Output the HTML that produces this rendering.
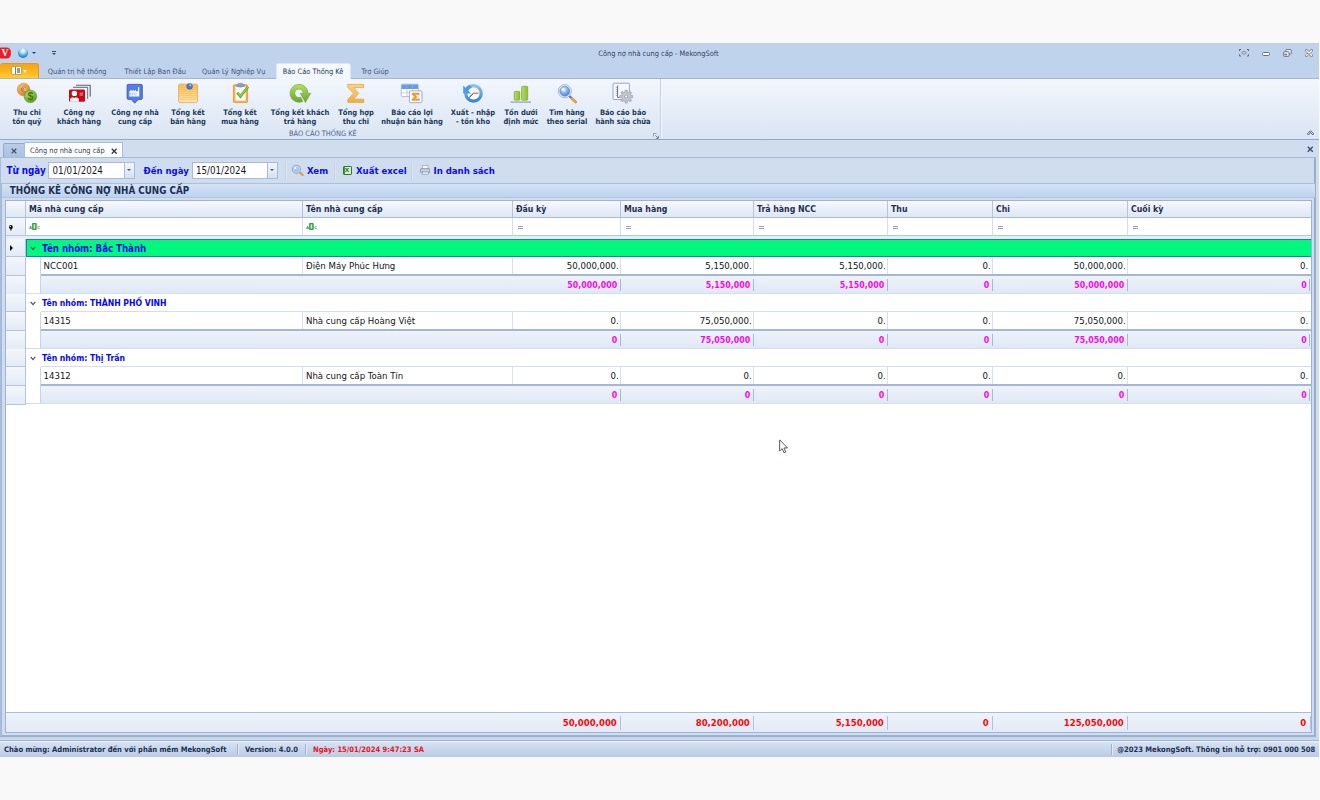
<!DOCTYPE html>
<html lang="vi">
<head>
<meta charset="utf-8">
<title>Công nợ nhà cung cấp - MekongSoft</title>
<style>
*{box-sizing:border-box;margin:0;padding:0}
html,body{width:1320px;height:800px;overflow:hidden;background:#f9f9f9}
body{font-family:"DejaVu Sans Condensed","Liberation Sans",sans-serif;font-size:7.4px;color:#1e395b;position:relative}
#win{position:absolute;left:0;top:43px;width:1319px;height:714px;background:#cfddee;overflow:hidden}
#win div{position:absolute;white-space:nowrap}
#titlebar{left:0;top:0;width:1319px;height:35px;background:#c0d3ec;border-top:1px solid #bccfe9}
#title{left:0;top:4.8px;width:1317px;text-align:center;font-size:7.4px;color:#33415f;line-height:12px}
.rtab{top:23px;font-size:7.4px;color:#3f5477;line-height:11px}
#rtab-active{left:275.6px;top:20.3px;width:75.8px;height:15.6px;background:linear-gradient(#f7fafe,#f2f6fd);border:1px solid #dbe5f3;border-bottom:none;border-radius:2.5px 2.5px 0 0}
#appbtn{left:0;top:20px;width:39px;height:15px;border-radius:3px 3px 0 0;background:linear-gradient(#f7a41a,#fbb31a 45%,#ffcf2e);border:1px solid #e3981e;border-bottom:none;border-left:none}
#ribbon{left:0;top:34.5px;width:1319px;height:62px;background:linear-gradient(#f3f7fd,#e8eff9 40%,#dae5f3);border-top:1px solid #a3b7d5;border-bottom:1px solid #93a9c9}
.rb{top:64.7px;text-align:center;font-weight:bold;font-size:7.5px;line-height:9.4px;color:#1e395b;transform:translateX(-50%)}
.ico{top:39px;width:24px;height:22px}
#grpcap{left:289px;top:85.5px;font-size:7.4px;color:#4e6590;line-height:10px}
#grpsep{left:659.5px;top:36px;width:1px;height:59px;background:#c3d1e5;box-shadow:1px 0 0 #f4f8fd}

/* doc area */
#dtx{left:3px;top:100.2px;width:22px;height:14.5px;background:linear-gradient(#b9cde8,#a9c0df);border:1px solid #8fa8cb;border-bottom:none;border-radius:2px 2px 0 0}
#dtab{left:23.8px;top:98.7px;width:99px;height:16.2px;background:#fff;border:1px solid #a9bcd9;border-bottom:none;border-radius:1px 1px 0 0}
#dtabt{left:30px;top:102px;font-size:7.4px;line-height:11px;color:#2c3e5c}
#panel{left:0;top:114px;width:1316px;height:580px;background:#cfddee;border-top:1px solid #a6b9d6;border-left:1px solid #a9bddb;border-right:2px solid #97aece;border-bottom:2px solid #9bb1d1}
#tb-line{left:2px;top:139.5px;width:1313px;height:1px;background:#aebfd8}
.lbl{font-weight:bold;color:#0a0af5;font-size:9.5px;line-height:12px;top:121.8px}
.inp{top:118.9px;height:17.1px;background:#fff;border:1px solid #a9bbd6;font-size:9.7px;color:#1a1a1a;line-height:15.4px;padding-left:3.2px}
.dd{top:119.9px;width:10.5px;height:15.1px;background:linear-gradient(#f2f6fb,#d5e1f0);border-left:1px solid #a9bbd6}
.dd:after{content:"";position:absolute;left:2.1px;top:6.2px;border:2.7px solid transparent;border-top:2.7px solid #46556f}
.tsep{top:118.5px;width:1px;height:18px;background:#c2d1e6;box-shadow:1px 0 0 #dae5f3}
#band{left:2px;top:140.5px;width:1313px;height:14px;background:linear-gradient(#d5e3f7,#c9dbf3 50%,#bed3ee);border-bottom:1px solid #b0c5e2}
#bandt{left:9.8px;top:142px;font-weight:bold;font-size:9.78px;line-height:12px;color:#1e2f52}
#grid{left:5px;top:157px;width:1307px;height:533px;background:#fff;border:1px solid #9db3d3}

.gh{background:linear-gradient(#f6f9fd,#eaf0f9 50%,#dde7f4)}
.ind{background:linear-gradient(#f4f7fc,#e3ebf6)}
.ht{font-weight:bold;font-size:8.7px;line-height:12px;color:#1e2f52}
.gt{font-weight:bold;font-size:8.6px;line-height:12px;color:#0505fa}
.gt1{font-weight:bold;font-size:9.6px;line-height:13px;color:#0808f0}
.ct{font-size:9.55px;line-height:12px;color:#141414}
.st{font-weight:bold;font-size:8.8px;line-height:12px;color:#fa0ae6}
.tt{font-weight:bold;font-size:9.5px;line-height:12px;color:#f50a0a}
.sm{background:linear-gradient(#eef3fa,#dfe8f5)}
.ft{background:linear-gradient(#eef3fa,#e2eaf6)}

#status{left:0;top:697px;width:1319px;height:17px;background:linear-gradient(#d9e5f4,#c9d8ec 45%,#b9cbe5);border-top:1px solid #9fb4d4;box-shadow:inset 0 1px 0 #eaf1fa}
.sbt{top:701.3px;font-weight:bold;font-size:7.56px;line-height:11px;color:#1e2f52}
.sbs{top:700.5px;width:1px;height:11px;background:#9fb2cf;box-shadow:1px 0 0 #e3ebf6}
#pbot{left:0;top:694px;width:1319px;height:3px;background:linear-gradient(#c3d1e5,#d0dcec)}
.x{font-size:9px;line-height:10px;color:#3b4866;font-weight:bold}
#inner{left:1px;top:140px;width:1314px;height:553px;border-left:1px solid #a3b7d6}
</style>
</head>
<body>
<div id="win">
  <div id="titlebar"></div>
  <div id="title">Công nợ nhà cung cấp - MekongSoft</div>
  <div id="appbtn"></div>
  <div class="rtab" style="left:47.7px">Quản trị hệ thống</div>
  <div class="rtab" style="left:124.5px">Thiết Lập Ban Đầu</div>
  <div class="rtab" style="left:202px">Quản Lý Nghiệp Vụ</div>
  <div class="rtab" style="left:361.5px">Trợ Giúp</div>
  <div id="ribbon"></div>
  <div id="rtab-active"></div>
  <div class="rtab" style="left:282.7px;top:23px;color:#1e395b">Báo Cáo Thống Kê</div>
  <div id="grpsep"></div>
  <div class="rb" style="left:27px">Thu chi<br>tồn quỹ</div>
  <div class="rb" style="left:79px">Công nợ<br>khách hàng</div>
  <div class="rb" style="left:135px">Công nợ nhà<br>cung cấp</div>
  <div class="rb" style="left:188px">Tổng kết<br>bán hàng</div>
  <div class="rb" style="left:240px">Tổng kết<br>mua hàng</div>
  <div class="rb" style="left:300px">Tổng kết khách<br>trả hàng</div>
  <div class="rb" style="left:356px">Tổng hợp<br>thu chi</div>
  <div class="rb" style="left:412px">Báo cáo lợi<br>nhuận bán hàng</div>
  <div class="rb" style="left:473px">Xuất - nhập<br>- tồn kho</div>
  <div class="rb" style="left:521px">Tồn dưới<br>định mức</div>
  <div class="rb" style="left:567px">Tìm hàng<br>theo serial</div>
  <div class="rb" style="left:623px">Báo cáo bảo<br>hành sửa chữa</div>
  <div id="grpcap">BÁO CÁO THỐNG KÊ</div>

  <div id="dtx"></div>
  <div id="dtab"></div>
  <div id="dtabt">Công nợ nhà cung cấp</div>
  <div id="panel"></div>
  <div class="lbl" style="left:6.4px;font-size:9.8px">Từ ngày</div>
  <div class="inp" style="left:48.4px;width:86.6px">01/01/2024</div>
  <div class="dd" style="left:123.5px"></div>
  <div class="lbl" style="left:143.5px">Đến ngày</div>
  <div class="inp" style="left:191.8px;width:86.6px">15/01/2024</div>
  <div class="dd" style="left:266.9px"></div>
  <div class="tsep" style="left:285px"></div>
  <div class="lbl" style="left:307px">Xem</div>
  <div class="tsep" style="left:334px"></div>
  <div class="lbl" style="left:356px">Xuất excel</div>
  <div class="tsep" style="left:411px"></div>
  <div class="lbl" style="left:433.5px">In danh sách</div>
  <div id="inner"></div>
  <div id="tb-line"></div>
  <div id="band"></div>
  <div id="bandt">THỐNG KÊ CÔNG NỢ NHÀ CUNG CẤP</div>
  <div id="grid"></div>
<!--GRID-->
  <div class="gh" style="left:6px;top:158px;width:1305px;height:16px;"></div>
  <div style="left:6px;top:173.8px;width:1305px;height:1px;background:#a9bcd8"></div>
  <div style="left:25px;top:158px;width:1px;height:16px;background:#b3c4dd"></div>
  <div style="left:302px;top:158px;width:1px;height:16px;background:#b3c4dd"></div>
  <div style="left:512px;top:158px;width:1px;height:16px;background:#b3c4dd"></div>
  <div style="left:620px;top:158px;width:1px;height:16px;background:#b3c4dd"></div>
  <div style="left:753px;top:158px;width:1px;height:16px;background:#b3c4dd"></div>
  <div style="left:887px;top:158px;width:1px;height:16px;background:#b3c4dd"></div>
  <div style="left:992px;top:158px;width:1px;height:16px;background:#b3c4dd"></div>
  <div style="left:1127px;top:158px;width:1px;height:16px;background:#b3c4dd"></div>
  <div class="ht" style="left:29px;top:159.6px;width:100px;height:12px;">Mã nhà cung cấp</div>
  <div class="ht" style="left:306px;top:159.6px;width:100px;height:12px;">Tên nhà cung cấp</div>
  <div class="ht" style="left:516px;top:159.6px;width:100px;height:12px;">Đầu kỳ</div>
  <div class="ht" style="left:624px;top:159.6px;width:100px;height:12px;">Mua hàng</div>
  <div class="ht" style="left:757px;top:159.6px;width:100px;height:12px;">Trả hàng NCC</div>
  <div class="ht" style="left:891px;top:159.6px;width:100px;height:12px;">Thu</div>
  <div class="ht" style="left:996px;top:159.6px;width:100px;height:12px;">Chi</div>
  <div class="ht" style="left:1131px;top:159.6px;width:100px;height:12px;">Cuối kỳ</div>
  <div class="ind" style="left:6px;top:174.8px;width:19.5px;height:17.2px;"></div>
  <div style="left:6px;top:192px;width:1305px;height:1px;background:#b7c7df"></div>
  <div style="left:302px;top:174.8px;width:1px;height:17.2px;background:#d3deee"></div>
  <div style="left:512px;top:174.8px;width:1px;height:17.2px;background:#d3deee"></div>
  <div style="left:620px;top:174.8px;width:1px;height:17.2px;background:#d3deee"></div>
  <div style="left:753px;top:174.8px;width:1px;height:17.2px;background:#d3deee"></div>
  <div style="left:887px;top:174.8px;width:1px;height:17.2px;background:#d3deee"></div>
  <div style="left:992px;top:174.8px;width:1px;height:17.2px;background:#d3deee"></div>
  <div style="left:1127px;top:174.8px;width:1px;height:17.2px;background:#d3deee"></div>
  <div style="left:25px;top:174.8px;width:1px;height:17.2px;background:#b3c4dd"></div>
  <div style="left:6px;top:193px;width:1305px;height:3px;background:#e6edf7"></div>
  <div style="left:28.9px;top:179px;width:11px;height:9px"><svg width="11" height="9" viewBox="0 0 11 9"><rect x="3.1" y="1" width="4.6" height="7" rx="0.7" fill="#35a23a"/><rect x="4.6" y="2.3" width="1.6" height="4.4" fill="#cfeccf"/><text x="0" y="6.6" font-size="4.2" font-weight="bold" fill="#4a6fb5" font-family="Liberation Sans, sans-serif">A</text><text x="8.2" y="6.6" font-size="4.2" font-weight="bold" fill="#4a6fb5" font-family="Liberation Sans, sans-serif">C</text></svg></div>
  <div style="left:305.9px;top:179px;width:11px;height:9px"><svg width="11" height="9" viewBox="0 0 11 9"><rect x="3.1" y="1" width="4.6" height="7" rx="0.7" fill="#35a23a"/><rect x="4.6" y="2.3" width="1.6" height="4.4" fill="#cfeccf"/><text x="0" y="6.6" font-size="4.2" font-weight="bold" fill="#4a6fb5" font-family="Liberation Sans, sans-serif">A</text><text x="8.2" y="6.6" font-size="4.2" font-weight="bold" fill="#4a6fb5" font-family="Liberation Sans, sans-serif">C</text></svg></div>
  <div style="left:518px;top:182.6px;width:4.5px;height:0.9px;background:#8ea3c6"></div>
  <div style="left:518px;top:184.6px;width:4.5px;height:0.9px;background:#8ea3c6"></div>
  <div style="left:626px;top:182.6px;width:4.5px;height:0.9px;background:#8ea3c6"></div>
  <div style="left:626px;top:184.6px;width:4.5px;height:0.9px;background:#8ea3c6"></div>
  <div style="left:759px;top:182.6px;width:4.5px;height:0.9px;background:#8ea3c6"></div>
  <div style="left:759px;top:184.6px;width:4.5px;height:0.9px;background:#8ea3c6"></div>
  <div style="left:893px;top:182.6px;width:4.5px;height:0.9px;background:#8ea3c6"></div>
  <div style="left:893px;top:184.6px;width:4.5px;height:0.9px;background:#8ea3c6"></div>
  <div style="left:998px;top:182.6px;width:4.5px;height:0.9px;background:#8ea3c6"></div>
  <div style="left:998px;top:184.6px;width:4.5px;height:0.9px;background:#8ea3c6"></div>
  <div style="left:1133px;top:182.6px;width:4.5px;height:0.9px;background:#8ea3c6"></div>
  <div style="left:1133px;top:184.6px;width:4.5px;height:0.9px;background:#8ea3c6"></div>
  <div style="left:8px;top:181px;width:6px;height:6px"><svg width="6" height="6" viewBox="0 0 6 6"><circle cx="2.9" cy="1.9" r="1.9" fill="#111"/><path d="M1.4 2.6H4.4L3.5 4V5.6H2.3V4Z" fill="#111"/><circle cx="2.3" cy="1.4" r="0.55" fill="#fff"/></svg></div>
  <div class="ind" style="left:6px;top:196px;width:19.5px;height:17px;"></div>
  <div style="left:6px;top:213px;width:19.5px;height:1px;background:#b3c4dd"></div>
  <div class="ind" style="left:6px;top:214px;width:19.5px;height:17.5px;"></div>
  <div style="left:6px;top:231.5px;width:19.5px;height:1px;background:#b3c4dd"></div>
  <div class="ind" style="left:6px;top:232.5px;width:19.5px;height:18px;"></div>
  <div style="left:6px;top:250.5px;width:19.5px;height:1px;background:#b3c4dd"></div>
  <div style="left:25px;top:195.5px;width:1px;height:56px;background:#b3c4dd"></div>
  <div style="left:26px;top:195.5px;width:1285px;height:18.2px;background:#00f87c;border:1px solid #2b78b3;border-right:none"></div>
  <div style="left:9.5px;top:201.6px;width:0;height:0;border:3.2px solid transparent;border-left:3.6px solid #111;border-right:none"></div>
  <div style="left:30px;top:200.8px;width:6px;height:5px"><svg width="6" height="5" viewBox="0 0 6 5"><path d="M0.7 0.9 L3 3.6 L5.3 0.9" fill="none" stroke="#2e5f4a" stroke-width="1.1"/></svg></div>
  <div class="gt1" style="left:42px;top:198.8px;width:200px;height:12px;">Tên nhóm: Bắc Thành</div>
  <div style="left:40px;top:213.5px;width:1px;height:37.5px;background:#c8d5e8"></div>
  <div style="left:302px;top:213.5px;width:1px;height:17.5px;background:#d6e0ef"></div>
  <div style="left:512px;top:213.5px;width:1px;height:17.5px;background:#d6e0ef"></div>
  <div style="left:620px;top:213.5px;width:1px;height:17.5px;background:#d6e0ef"></div>
  <div style="left:753px;top:213.5px;width:1px;height:17.5px;background:#d6e0ef"></div>
  <div style="left:887px;top:213.5px;width:1px;height:17.5px;background:#d6e0ef"></div>
  <div style="left:992px;top:213.5px;width:1px;height:17.5px;background:#d6e0ef"></div>
  <div style="left:1127px;top:213.5px;width:1px;height:17.5px;background:#d6e0ef"></div>
  <div class="ct" style="left:43.5px;top:216.5px;width:200px;height:12px;">NCC001</div>
  <div class="ct" style="left:306px;top:216.5px;width:200px;height:12px;">Điện Máy Phúc Hưng</div>
  <div class="ct" style="left:498.7px;top:216.5px;width:120px;height:12px;text-align:right">50,000,000.</div>
  <div class="ct" style="left:631.7px;top:216.5px;width:120px;height:12px;text-align:right">5,150,000.</div>
  <div class="ct" style="left:765.7px;top:216.5px;width:120px;height:12px;text-align:right">5,150,000.</div>
  <div class="ct" style="left:870.7px;top:216.5px;width:120px;height:12px;text-align:right">0.</div>
  <div class="ct" style="left:1005.7px;top:216.5px;width:120px;height:12px;text-align:right">50,000,000.</div>
  <div class="ct" style="left:1188.2px;top:216.5px;width:120px;height:12px;text-align:right">0.</div>
  <div style="left:40.5px;top:231.3px;width:1270.5px;height:1.6px;background:#a3b7d6"></div>
  <div class="sm" style="left:41px;top:232.9px;width:1270px;height:17.4px;"></div>
  <div style="left:26px;top:250.3px;width:1285px;height:1px;background:#d3deee"></div>
  <div style="left:619.8px;top:236px;width:1.2px;height:12px;background:#aab9d3"></div>
  <div class="st" style="left:497.3px;top:235.7px;width:120px;height:12px;text-align:right">50,000,000</div>
  <div style="left:752.8px;top:236px;width:1.2px;height:12px;background:#aab9d3"></div>
  <div class="st" style="left:630.3px;top:235.7px;width:120px;height:12px;text-align:right">5,150,000</div>
  <div style="left:886.8px;top:236px;width:1.2px;height:12px;background:#aab9d3"></div>
  <div class="st" style="left:764.3px;top:235.7px;width:120px;height:12px;text-align:right">5,150,000</div>
  <div style="left:991.8px;top:236px;width:1.2px;height:12px;background:#aab9d3"></div>
  <div class="st" style="left:869.3px;top:235.7px;width:120px;height:12px;text-align:right">0</div>
  <div style="left:1126.8px;top:236px;width:1.2px;height:12px;background:#aab9d3"></div>
  <div class="st" style="left:1004.3px;top:235.7px;width:120px;height:12px;text-align:right">50,000,000</div>
  <div style="left:1309.3px;top:236px;width:1.2px;height:12px;background:#aab9d3"></div>
  <div class="st" style="left:1186.8px;top:235.7px;width:120px;height:12px;text-align:right">0</div>
  <div class="ind" style="left:6px;top:251px;width:19.5px;height:17px;"></div>
  <div style="left:6px;top:268px;width:19.5px;height:1px;background:#b3c4dd"></div>
  <div class="ind" style="left:6px;top:269px;width:19.5px;height:17.5px;"></div>
  <div style="left:6px;top:286.5px;width:19.5px;height:1px;background:#b3c4dd"></div>
  <div class="ind" style="left:6px;top:287.5px;width:19.5px;height:18px;"></div>
  <div style="left:6px;top:305.5px;width:19.5px;height:1px;background:#b3c4dd"></div>
  <div style="left:25px;top:250.5px;width:1px;height:56px;background:#b3c4dd"></div>
  <div style="left:30px;top:255.8px;width:6px;height:5px"><svg width="6" height="5" viewBox="0 0 6 5"><path d="M0.7 0.9 L3 3.6 L5.3 0.9" fill="none" stroke="#3a4c6c" stroke-width="1.1"/></svg></div>
  <div class="gt" style="left:42px;top:254px;width:200px;height:12px;">Tên nhóm: THÀNH PHỐ VINH</div>
  <div style="left:40.5px;top:268px;width:1270.5px;height:1px;background:#d3deee"></div>
  <div style="left:40px;top:268.5px;width:1px;height:37.5px;background:#c8d5e8"></div>
  <div style="left:302px;top:268.5px;width:1px;height:17.5px;background:#d6e0ef"></div>
  <div style="left:512px;top:268.5px;width:1px;height:17.5px;background:#d6e0ef"></div>
  <div style="left:620px;top:268.5px;width:1px;height:17.5px;background:#d6e0ef"></div>
  <div style="left:753px;top:268.5px;width:1px;height:17.5px;background:#d6e0ef"></div>
  <div style="left:887px;top:268.5px;width:1px;height:17.5px;background:#d6e0ef"></div>
  <div style="left:992px;top:268.5px;width:1px;height:17.5px;background:#d6e0ef"></div>
  <div style="left:1127px;top:268.5px;width:1px;height:17.5px;background:#d6e0ef"></div>
  <div class="ct" style="left:43.5px;top:271.5px;width:200px;height:12px;">14315</div>
  <div class="ct" style="left:306px;top:271.5px;width:200px;height:12px;">Nhà cung cấp Hoàng Việt</div>
  <div class="ct" style="left:498.7px;top:271.5px;width:120px;height:12px;text-align:right">0.</div>
  <div class="ct" style="left:631.7px;top:271.5px;width:120px;height:12px;text-align:right">75,050,000.</div>
  <div class="ct" style="left:765.7px;top:271.5px;width:120px;height:12px;text-align:right">0.</div>
  <div class="ct" style="left:870.7px;top:271.5px;width:120px;height:12px;text-align:right">0.</div>
  <div class="ct" style="left:1005.7px;top:271.5px;width:120px;height:12px;text-align:right">75,050,000.</div>
  <div class="ct" style="left:1188.2px;top:271.5px;width:120px;height:12px;text-align:right">0.</div>
  <div style="left:40.5px;top:286.3px;width:1270.5px;height:1.6px;background:#a3b7d6"></div>
  <div class="sm" style="left:41px;top:287.9px;width:1270px;height:17.4px;"></div>
  <div style="left:26px;top:305.3px;width:1285px;height:1px;background:#d3deee"></div>
  <div style="left:619.8px;top:291px;width:1.2px;height:12px;background:#aab9d3"></div>
  <div class="st" style="left:497.3px;top:290.7px;width:120px;height:12px;text-align:right">0</div>
  <div style="left:752.8px;top:291px;width:1.2px;height:12px;background:#aab9d3"></div>
  <div class="st" style="left:630.3px;top:290.7px;width:120px;height:12px;text-align:right">75,050,000</div>
  <div style="left:886.8px;top:291px;width:1.2px;height:12px;background:#aab9d3"></div>
  <div class="st" style="left:764.3px;top:290.7px;width:120px;height:12px;text-align:right">0</div>
  <div style="left:991.8px;top:291px;width:1.2px;height:12px;background:#aab9d3"></div>
  <div class="st" style="left:869.3px;top:290.7px;width:120px;height:12px;text-align:right">0</div>
  <div style="left:1126.8px;top:291px;width:1.2px;height:12px;background:#aab9d3"></div>
  <div class="st" style="left:1004.3px;top:290.7px;width:120px;height:12px;text-align:right">75,050,000</div>
  <div style="left:1309.3px;top:291px;width:1.2px;height:12px;background:#aab9d3"></div>
  <div class="st" style="left:1186.8px;top:290.7px;width:120px;height:12px;text-align:right">0</div>
  <div class="ind" style="left:6px;top:306px;width:19.5px;height:17px;"></div>
  <div style="left:6px;top:323px;width:19.5px;height:1px;background:#b3c4dd"></div>
  <div class="ind" style="left:6px;top:324px;width:19.5px;height:17.5px;"></div>
  <div style="left:6px;top:341.5px;width:19.5px;height:1px;background:#b3c4dd"></div>
  <div class="ind" style="left:6px;top:342.5px;width:19.5px;height:18px;"></div>
  <div style="left:6px;top:360.5px;width:19.5px;height:1px;background:#b3c4dd"></div>
  <div style="left:25px;top:305.5px;width:1px;height:56px;background:#b3c4dd"></div>
  <div style="left:30px;top:310.8px;width:6px;height:5px"><svg width="6" height="5" viewBox="0 0 6 5"><path d="M0.7 0.9 L3 3.6 L5.3 0.9" fill="none" stroke="#3a4c6c" stroke-width="1.1"/></svg></div>
  <div class="gt" style="left:42px;top:309px;width:200px;height:12px;">Tên nhóm: Thị Trấn</div>
  <div style="left:40.5px;top:323px;width:1270.5px;height:1px;background:#d3deee"></div>
  <div style="left:40px;top:323.5px;width:1px;height:37.5px;background:#c8d5e8"></div>
  <div style="left:302px;top:323.5px;width:1px;height:17.5px;background:#d6e0ef"></div>
  <div style="left:512px;top:323.5px;width:1px;height:17.5px;background:#d6e0ef"></div>
  <div style="left:620px;top:323.5px;width:1px;height:17.5px;background:#d6e0ef"></div>
  <div style="left:753px;top:323.5px;width:1px;height:17.5px;background:#d6e0ef"></div>
  <div style="left:887px;top:323.5px;width:1px;height:17.5px;background:#d6e0ef"></div>
  <div style="left:992px;top:323.5px;width:1px;height:17.5px;background:#d6e0ef"></div>
  <div style="left:1127px;top:323.5px;width:1px;height:17.5px;background:#d6e0ef"></div>
  <div class="ct" style="left:43.5px;top:326.5px;width:200px;height:12px;">14312</div>
  <div class="ct" style="left:306px;top:326.5px;width:200px;height:12px;">Nhà cung cấp Toàn Tín</div>
  <div class="ct" style="left:498.7px;top:326.5px;width:120px;height:12px;text-align:right">0.</div>
  <div class="ct" style="left:631.7px;top:326.5px;width:120px;height:12px;text-align:right">0.</div>
  <div class="ct" style="left:765.7px;top:326.5px;width:120px;height:12px;text-align:right">0.</div>
  <div class="ct" style="left:870.7px;top:326.5px;width:120px;height:12px;text-align:right">0.</div>
  <div class="ct" style="left:1005.7px;top:326.5px;width:120px;height:12px;text-align:right">0.</div>
  <div class="ct" style="left:1188.2px;top:326.5px;width:120px;height:12px;text-align:right">0.</div>
  <div style="left:40.5px;top:341.3px;width:1270.5px;height:1.6px;background:#a3b7d6"></div>
  <div class="sm" style="left:41px;top:342.9px;width:1270px;height:17.4px;"></div>
  <div style="left:26px;top:360.3px;width:1285px;height:1px;background:#d3deee"></div>
  <div style="left:619.8px;top:346px;width:1.2px;height:12px;background:#aab9d3"></div>
  <div class="st" style="left:497.3px;top:345.7px;width:120px;height:12px;text-align:right">0</div>
  <div style="left:752.8px;top:346px;width:1.2px;height:12px;background:#aab9d3"></div>
  <div class="st" style="left:630.3px;top:345.7px;width:120px;height:12px;text-align:right">0</div>
  <div style="left:886.8px;top:346px;width:1.2px;height:12px;background:#aab9d3"></div>
  <div class="st" style="left:764.3px;top:345.7px;width:120px;height:12px;text-align:right">0</div>
  <div style="left:991.8px;top:346px;width:1.2px;height:12px;background:#aab9d3"></div>
  <div class="st" style="left:869.3px;top:345.7px;width:120px;height:12px;text-align:right">0</div>
  <div style="left:1126.8px;top:346px;width:1.2px;height:12px;background:#aab9d3"></div>
  <div class="st" style="left:1004.3px;top:345.7px;width:120px;height:12px;text-align:right">0</div>
  <div style="left:1309.3px;top:346px;width:1.2px;height:12px;background:#aab9d3"></div>
  <div class="st" style="left:1186.8px;top:345.7px;width:120px;height:12px;text-align:right">0</div>
  <div style="left:6px;top:669px;width:1305px;height:1px;background:#a9bcd8"></div>
  <div class="ft" style="left:6px;top:670px;width:1305px;height:19px;"></div>
  <div style="left:620px;top:673px;width:1.2px;height:14px;background:#b3c2da"></div>
  <div class="tt" style="left:496.8px;top:674px;width:120px;height:12px;text-align:right">50,000,000</div>
  <div style="left:753px;top:673px;width:1.2px;height:14px;background:#b3c2da"></div>
  <div class="tt" style="left:629.8px;top:674px;width:120px;height:12px;text-align:right">80,200,000</div>
  <div style="left:887px;top:673px;width:1.2px;height:14px;background:#b3c2da"></div>
  <div class="tt" style="left:763.8px;top:674px;width:120px;height:12px;text-align:right">5,150,000</div>
  <div style="left:992px;top:673px;width:1.2px;height:14px;background:#b3c2da"></div>
  <div class="tt" style="left:868.8px;top:674px;width:120px;height:12px;text-align:right">0</div>
  <div style="left:1127px;top:673px;width:1.2px;height:14px;background:#b3c2da"></div>
  <div class="tt" style="left:1003.8px;top:674px;width:120px;height:12px;text-align:right">125,050,000</div>
  <div style="left:1309.5px;top:673px;width:1.2px;height:14px;background:#b3c2da"></div>
  <div class="tt" style="left:1186.3px;top:674px;width:120px;height:12px;text-align:right">0</div>
<!--/GRID-->
  <div id="pbot"></div>
  <div id="status"></div>
  <div class="sbt" style="left:4px">Chào mừng: Administrator đến với phần mềm MekongSoft</div>
  <div class="sbs" style="left:236.5px"></div>
  <div class="sbt" style="left:245px">Version: 4.0.0</div>
  <div class="sbs" style="left:304.5px"></div>
  <div class="sbt" style="left:313px;color:#ee1020">Ngày: 15/01/2024 9:47:23 SA</div>
  <div class="sbs" style="left:1110.5px"></div>
  <div class="sbt" style="left:1117.3px">@2023 MekongSoft. Thông tin hỗ trợ: 0901 000 508</div>

  <!-- window controls -->
  <div style="left:1239px;top:6px;width:10px;height:8px"><svg width="10" height="8" viewBox="0 0 10 8"><path d="M0.5 2V0.5H2M8 0.5H9.5V2M9.5 5.5V7H8M2 7H0.5V5.5" fill="none" stroke="#5a6274" stroke-width="1"/><ellipse cx="5" cy="3.8" rx="2.2" ry="1.4" fill="#c3c9d6" stroke="#7d8596" stroke-width="0.8"/></svg></div>
  <div style="left:1262px;top:9px;width:8px;height:4.2px;background:#fff;border:1px solid #666e7e;border-radius:1.5px"></div>
  <div style="left:1283px;top:5.6px;width:9.2px;height:8.3px"><svg width="9.2" height="8.3" viewBox="0 0 10 9"><rect x="3" y="0.6" width="6" height="5" rx="0.8" fill="#e9edf4" stroke="#666e7e" stroke-width="1"/><rect x="0.6" y="3" width="6" height="5" rx="0.8" fill="#f6f8fb" stroke="#666e7e" stroke-width="1"/><rect x="1.5" y="5" width="3" height="2" fill="#7b8496"/></svg></div>
  <div style="left:1304.8px;top:5.8px;width:8px;height:8px"><svg width="8" height="8" viewBox="0 0 9 9"><path d="M1.6 1.6L7.4 7.4M7.4 1.6L1.6 7.4" stroke="#6a7080" stroke-width="3" stroke-linecap="round"/><path d="M1.6 1.6L7.4 7.4M7.4 1.6L1.6 7.4" stroke="#fff" stroke-width="1.5" stroke-linecap="round"/></svg></div>
  <!-- ribbon minimize chevron -->
  <div style="left:1306.6px;top:85.2px;width:7px;height:5.4px"><svg width="7" height="5.4" viewBox="0 0 8 6"><path d="M1 4.8L4 1.6L7 4.8" fill="none" stroke="#55607a" stroke-width="2.2" stroke-linejoin="round" stroke-linecap="round"/><path d="M1 4.8L4 1.6L7 4.8" fill="none" stroke="#fff" stroke-width="0.9" stroke-linejoin="round" stroke-linecap="round"/></svg></div>
  <!-- mdi close -->
  <div style="left:1306.8px;top:103px;width:6.6px;height:6.6px"><svg width="6.6" height="6.6" viewBox="0 0 7 7"><path d="M0.8 0.8L6.2 6.2M6.2 0.8L0.8 6.2" stroke="#3e4a6a" stroke-width="1.5"/></svg></div>
  <!-- doc tab x -->
  <div style="left:11px;top:103.5px;width:6px;height:6px"><svg width="6" height="6" viewBox="0 0 6 6"><path d="M0.7 0.7L5.3 5.3M5.3 0.7L0.7 5.3" stroke="#46536f" stroke-width="1.25"/></svg></div>
  <div style="left:111px;top:104.2px;width:6.4px;height:6.4px"><svg width="6.4" height="6.4" viewBox="0 0 6 6"><path d="M0.7 0.7L5.3 5.3M5.3 0.7L0.7 5.3" stroke="#2c3550" stroke-width="1.3"/></svg></div>
  <!-- app logo -->
  <div style="left:0;top:4px;width:13px;height:12px"><svg width="13" height="12" viewBox="0 0 13 12"><rect x="-3" y="0.5" width="13.9" height="11" rx="4.2" fill="#ed1c24"/><text x="5.1" y="9.2" text-anchor="middle" font-family="Liberation Serif, serif" font-weight="bold" font-size="9.8" fill="#fff">V</text></svg></div>
  <div style="left:17.8px;top:4.8px;width:10px;height:10px;border-radius:50%;background:radial-gradient(circle at 50% 28%,#f4fbff 0,#cfe9fa 22%,#4aa6e6 55%,#1c74c8 78%,#56c2f2 100%)"></div>
  <div style="left:31.8px;top:9px;width:0;height:0;border:2.2px solid transparent;border-top:2.8px solid #1f3d7a;border-bottom:none"></div>
  <div style="left:52.3px;top:7.8px;width:4.2px;height:1px;background:#3d4a66"></div>
  <div style="left:52.3px;top:9.8px;width:0;height:0;border:2.1px solid transparent;border-top:2.4px solid #3d4a66;border-bottom:none"></div>
  <!-- app button glyph -->
  <div style="left:11.2px;top:23.2px;width:10.5px;height:8.4px;background:#fff;border:0.8px solid #c9a24a;border-radius:1px"></div>
  <div style="left:15.2px;top:23.6px;width:0.8px;height:7.6px;background:#8a7a55"></div>
  <div style="left:17px;top:25px;width:3px;height:5px;background:#9a9a9a"></div>
  <div style="left:23.4px;top:27px;width:0;height:0;border:2.4px solid transparent;border-top:3px solid #fff6dd;border-bottom:none"></div>

  <!-- toolbar icons -->
  <div style="left:291px;top:120.5px;width:14px;height:14px"><svg width="14" height="14" viewBox="291 163.5 14 14"><path d="M299.4 171.8L302.8 174.6" stroke="#e8963a" stroke-width="2" stroke-linecap="round"/><circle cx="296.4" cy="168.8" r="4.1" fill="#cfe3f7" stroke="#9aa8c8" stroke-width="1.1"/><circle cx="296.4" cy="168.8" r="2.9" fill="#9cc6ee"/><circle cx="295.4" cy="167.7" r="1.1" fill="#f2f8ff"/></svg></div>
  <div style="left:343px;top:122.6px;width:9.2px;height:9.4px;background:#3c9a34;border-radius:1.2px;border:0.6px solid #2a7a26"></div>
  <div style="left:344.5px;top:124px;width:6.3px;height:6.6px;background:#d9efd4"></div>
  <div style="left:344.7px;top:122.4px;font-weight:bold;font-size:8px;line-height:10px;color:#1f7a1f;font-family:'Liberation Sans',sans-serif">x</div>
  <div style="left:419.6px;top:122.3px;width:10.4px;height:10px"><svg width="10.4" height="10" viewBox="0 0 11 10.5"><rect x="2.6" y="0.4" width="5.8" height="4" fill="#fdfdfe" stroke="#8d95a8" stroke-width="0.6"/><rect x="0.5" y="3.8" width="10" height="4.4" rx="1.2" fill="#c9cfdb" stroke="#6f7890" stroke-width="0.7"/><rect x="2.4" y="6.6" width="6.2" height="3.4" fill="#f4f8ff" stroke="#7f8ca8" stroke-width="0.6"/><path d="M3.2 8.2H7.8" stroke="#7fb0e0" stroke-width="0.7"/></svg></div>
  <div style="left:778.9px;top:395.5px;width:9.7px;height:15.1px"><svg width="9.7" height="15.1" viewBox="0 0 9 14"><path d="M0.6 0.8V11.2L3 8.9L4.7 12.8L6.3 12.1L4.6 8.3H7.9Z" fill="#fff" stroke="#3a3f4c" stroke-width="0.8" stroke-linejoin="round"/></svg></div>
<!--RICONS-->
  <div style="left:0;top:37px;width:660px;height:28px"><svg width="660" height="28" viewBox="0 80 660 28">
  <defs>
    <radialGradient id="gOr" cx="0.4" cy="0.35" r="0.7"><stop offset="0" stop-color="#f9d9a0"/><stop offset="0.6" stop-color="#e8a24e"/><stop offset="1" stop-color="#c97a2a"/></radialGradient>
    <radialGradient id="gGr" cx="0.4" cy="0.35" r="0.7"><stop offset="0" stop-color="#b9e070"/><stop offset="0.6" stop-color="#7db63a"/><stop offset="1" stop-color="#5a9424"/></radialGradient>
    <linearGradient id="gNote" x1="0" y1="0" x2="0" y2="1"><stop offset="0" stop-color="#f7bd55"/><stop offset="1" stop-color="#fde6b0"/></linearGradient>
    <linearGradient id="gGreen" x1="0" y1="0" x2="0" y2="1"><stop offset="0" stop-color="#b4e068"/><stop offset="1" stop-color="#6aa62a"/></linearGradient>
    <linearGradient id="gSig" x1="0" y1="0" x2="0" y2="1"><stop offset="0" stop-color="#fbd584"/><stop offset="1" stop-color="#f0ad48"/></linearGradient>
    <linearGradient id="gBlue" x1="0" y1="0" x2="0" y2="1"><stop offset="0" stop-color="#8cc2f0"/><stop offset="1" stop-color="#3a86d2"/></linearGradient>
    <radialGradient id="gLens" cx="0.4" cy="0.35" r="0.7"><stop offset="0" stop-color="#eaf4ff"/><stop offset="0.5" stop-color="#7fb2ee"/><stop offset="1" stop-color="#3f7fd8"/></radialGradient>
    <linearGradient id="gBar" x1="0" y1="0" x2="1" y2="0"><stop offset="0" stop-color="#b6dc62"/><stop offset="1" stop-color="#8cbc38"/></linearGradient>
  </defs>
  <!-- 1 coins -->
  <circle cx="23.6" cy="89.5" r="6.3" fill="url(#gOr)" stroke="#d08a3c" stroke-width="0.6"/>
  <circle cx="23.6" cy="89.5" r="4.2" fill="none" stroke="#c67c30" stroke-width="0.7" opacity="0.7"/>
  <path d="M25.6 87.6A2.6 2.6 0 1 0 25.6 91.4M21.4 88.9h2.6M21.4 90.1h2.6" fill="none" stroke="#b56a26" stroke-width="0.9"/>
  <circle cx="30.4" cy="96.4" r="6.3" fill="url(#gGr)" stroke="#6a9c30" stroke-width="0.6"/>
  <text x="30.4" y="100.2" text-anchor="middle" font-family="Liberation Sans, sans-serif" font-weight="bold" font-size="10.5" fill="#3d7418">$</text>
  <!-- 2 customer cards -->
  <path d="M76 85.2H90.2V96.5" fill="none" stroke="#5d6168" stroke-width="1.1"/>
  <path d="M73 87.4H87.6V99" fill="none" stroke="#7d8288" stroke-width="1.1"/>
  <rect x="69" y="89.6" width="16" height="12.2" rx="1.2" fill="#c80a12"/>
  <circle cx="74.4" cy="93.4" r="2.7" fill="#fff"/>
  <path d="M70.2 101.8V99.2Q70.2 97.4 72.4 97.4H76.6Q78.8 97.4 78.8 99.2V101.8Z" fill="#fff"/>
  <path d="M73.8 96.2L74.5 98.8L75.2 96.2Z" fill="#7a2a2a"/>
  <path d="M79.6 93.2H83M79.6 95H83" stroke="#f3b6b8" stroke-width="0.9"/>
  <!-- 3 supplier pin -->
  <path d="M128.2 84.4H141.2Q142.3 84.4 142.3 85.5V98.3Q142.3 99.4 141.2 99.4H138.2L134.7 103.2L131.2 99.4H128.2Q127.1 99.4 127.1 98.3V85.5Q127.1 84.4 128.2 84.4Z" fill="#4f7df6" stroke="#3c4f86" stroke-width="0.8"/>
  <path d="M129.4 96.6V91.2L131.6 89.8V91.2L133.8 89.8V91.2L136 89.8V91.2H138V87.2H139.2V96.6Z" fill="#fff"/>
  <path d="M130.6 92.6V95.4M132.4 92.6V95.4M134.2 92.6V95.4M136 92.6V95.4" stroke="#8aa6f4" stroke-width="0.7"/>
  <!-- 4 sticky note -->
  <rect x="178.6" y="84.2" width="19" height="18.4" rx="1.2" fill="url(#gNote)" stroke="#dfa45c" stroke-width="0.8"/>
  <path d="M179.5 87.5H196.8M179.5 89.5H196.8M179.5 91.5H196.8M179.5 93.5H196.8M179.5 95.5H196.8M179.5 97.5H196.8M179.5 99.5H196.8" stroke="#f5b84e" stroke-width="0.6" opacity="0.8"/>
  <circle cx="189.6" cy="86.4" r="2.9" fill="#3f7cc4" stroke="#2d5e9e" stroke-width="0.5"/>
  <circle cx="190.3" cy="85.3" r="1" fill="#b9d6f2"/>
  <!-- 5 clipboard check -->
  <rect x="233.4" y="84.8" width="14.2" height="17.8" rx="1" fill="#f3b24e" stroke="#dd9434" stroke-width="0.8"/>
  <rect x="235.4" y="86" width="10.2" height="14.6" fill="#fafcff"/>
  <path d="M236.2 86.4Q236.2 83.4 240.5 83.2Q244.8 83.4 244.8 86.4Q240.5 88 236.2 86.4Z" fill="#8e9dc2" stroke="#7483ab" stroke-width="0.5"/>
  <path d="M237.2 92.6L240.4 96.4L248 86.8" fill="none" stroke="#5f9c20" stroke-width="2.6" stroke-linejoin="miter"/>
  <path d="M237.2 92.4L240.4 96.0L248 86.6" fill="none" stroke="#9bd348" stroke-width="1.3"/>
  <!-- 6 green refresh -->
  <path d="M308 93.3A9 9 0 1 0 302.8 101.46L300.8 97.2A4.3 4.3 0 1 1 303.3 93.3H300.3L305.4 102.5L310.8 93.3Z" fill="url(#gGreen)" stroke="#6da22e" stroke-width="0.6" stroke-linejoin="round"/>
  <!-- 7 sigma -->
  <path d="M347.8 84.4H363.6V87.6H353.6L358.6 93.3L353.6 99.2H363.8V102.4H347.8V99.6L353.4 93.3L347.8 87.2Z" fill="url(#gSig)" stroke="#e09c3c" stroke-width="0.7" stroke-linejoin="round"/>
  <!-- 8 table sigma -->
  <rect x="401.3" y="84.2" width="17" height="12.4" rx="1" fill="#fff" stroke="#97a6d2" stroke-width="0.7"/>
  <path d="M401.6 85.2Q401.6 84.5 402.3 84.5H417.3Q418 84.5 418 85.2V89H401.6Z" fill="#5f9fe2"/>
  <path d="M401.5 92.8H418.2M407 84.4V96.4M412.6 84.4V96.4" stroke="#a7b4da" stroke-width="0.6"/>
  <rect x="409.4" y="90.8" width="12.6" height="11.9" rx="1.2" fill="#f6f7fb" stroke="#8f9cca" stroke-width="0.8"/>
  <path d="M412 93H419.2V94.8H415L417.2 96.8L415 98.8H419.4V100.6H412V99.2L414.6 96.8L412 94.4Z" fill="#ee9c2a" stroke="#d88718" stroke-width="0.3"/>
  <!-- 9 blue clock arrow -->
  <circle cx="473.5" cy="93.4" r="7.7" fill="#f7faff" stroke="url(#gBlue)" stroke-width="3.2"/>
  <path d="M463.2 85.4V93.6H471.2L468.2 90.6Q469.6 88.4 472 87.4L469.6 84.8Q467 86 465.6 87.8Z" fill="#4f9ae0"/>
  <path d="M473.6 93.2L469.2 97.4" stroke="#222" stroke-width="1"/>
  <path d="M473.6 93.2H478.6" stroke="#e05252" stroke-width="1.1"/>
  <!-- 10 bars -->
  <rect x="514.2" y="91.4" width="5.6" height="8.8" rx="0.8" fill="url(#gBar)" stroke="#7ca830" stroke-width="0.7"/>
  <rect x="521.6" y="86.3" width="6.1" height="13.9" rx="0.8" fill="url(#gBar)" stroke="#7ca830" stroke-width="0.7"/>
  <path d="M510.6 102.1H531" stroke="#8891b0" stroke-width="1.1"/>
  <!-- 11 magnifier -->
  <path d="M569.6 96.2L575.6 102" stroke="#5d74ae" stroke-width="2.2" stroke-linecap="round"/>
  <path d="M572.2 98.8L575.7 102.2" stroke="#eea23c" stroke-width="2.6" stroke-linecap="round"/>
  <circle cx="564.8" cy="91.2" r="6.6" fill="#eef1f8" stroke="#9ca6cc" stroke-width="0.8"/>
  <circle cx="564.8" cy="91.2" r="5" fill="url(#gLens)" stroke="#5f86d0" stroke-width="0.6"/>
  <circle cx="563.2" cy="89.4" r="1.6" fill="#f4f9ff" opacity="0.9"/>
  <!-- 12 doc gear -->
  <rect x="613" y="83.2" width="16.4" height="16.4" rx="1" fill="#f5f7fc" stroke="#8d9cd2" stroke-width="0.9"/>
  <path d="M617.6 85.6V97.4H619.4" fill="none" stroke="#5a5f6c" stroke-width="0.9"/>
  <path d="M615.8 87.4H617.6M615.8 89.4H617.6M615.8 91.4H617.6M615.8 93.4H617.6M615.8 95.4H617.6" stroke="#7c8290" stroke-width="0.6"/>
  <g transform="translate(626.2 96.6)">
    <circle r="4.6" fill="#b9bdc6" stroke="#9599a4" stroke-width="0.5"/>
    <g fill="#b9bdc6" stroke="#9599a4" stroke-width="0.4">
      <rect x="-1.3" y="-6.6" width="2.6" height="3" rx="0.5"/>
      <rect x="-1.3" y="-6.6" width="2.6" height="3" rx="0.5" transform="rotate(45)"/>
      <rect x="-1.3" y="-6.6" width="2.6" height="3" rx="0.5" transform="rotate(90)"/>
      <rect x="-1.3" y="-6.6" width="2.6" height="3" rx="0.5" transform="rotate(135)"/>
      <rect x="-1.3" y="-6.6" width="2.6" height="3" rx="0.5" transform="rotate(180)"/>
      <rect x="-1.3" y="-6.6" width="2.6" height="3" rx="0.5" transform="rotate(225)"/>
      <rect x="-1.3" y="-6.6" width="2.6" height="3" rx="0.5" transform="rotate(270)"/>
      <rect x="-1.3" y="-6.6" width="2.6" height="3" rx="0.5" transform="rotate(315)"/>
    </g>
    <circle r="4.2" fill="#c3c7cf"/>
    <circle r="1.9" fill="#9da1ab"/>
    <circle r="1.1" fill="#f2f4f8"/>
  </g>
  </svg></div>
  <!-- group launcher -->
  <div style="left:652.5px;top:89px;width:6px;height:6px"><svg width="6" height="6" viewBox="0 0 6 6"><path d="M0.5 3.5V0.5H3.5" fill="none" stroke="#8d9ab5" stroke-width="0.9"/><path d="M2.4 2.4L5.2 5.2M5.4 2.8V5.4H2.8" fill="none" stroke="#6d7a96" stroke-width="0.9"/></svg></div>
<!--/RICONS-->


</div>
</body>
</html>
